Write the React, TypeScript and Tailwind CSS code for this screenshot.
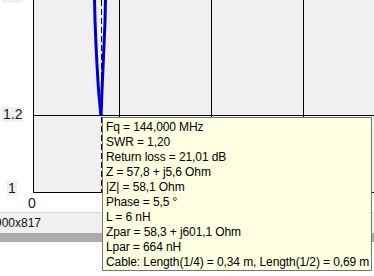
import React from "react";

const lines = [
  "Fq = 144,000 MHz",
  "SWR = 1,20",
  "Return loss = 21,01 dB",
  "Z = 57,8 + j5,6 Ohm",
  "|Z| = 58,1 Ohm",
  "Phase = 5,5 °",
  "L = 6 nH",
  "Zpar = 58,3 + j601,1 Ohm",
  "Lpar = 664 nH",
  "Cable: Length(1/4) = 0,34 m, Length(1/2) = 0,69 m",
];

function Chart() {
  return (
    <svg width="374" height="212" className="absolute inset-0" viewBox="0 0 374 212">
      <rect x="34" y="0" width="340" height="192" fill="#f0f0f0" />
      {/* grid */}
      <line x1="119.5" y1="0" x2="119.5" y2="192" stroke="#000" strokeWidth="1" />
      <line x1="211.5" y1="0" x2="211.5" y2="192" stroke="#000" strokeWidth="1" />
      <line x1="303.5" y1="0" x2="303.5" y2="192" stroke="#000" strokeWidth="1" />
      <line x1="33" y1="115.5" x2="374" y2="115.5" stroke="#000" strokeWidth="1" />
      {/* axes */}
      <line x1="33.5" y1="0" x2="33.5" y2="193" stroke="#000" strokeWidth="1" />
      <line x1="33" y1="192.5" x2="374" y2="192.5" stroke="#000" strokeWidth="1" />
      {/* marker */}
      <line x1="101.5" y1="0" x2="101.5" y2="192" stroke="#000" strokeWidth="1" strokeDasharray="6 3" />
      {/* SWR curve */}
      <polyline
        points="94.5,-2 95,20 96,45 97,65 98.5,90 100,106 101,116"
        fill="none"
        stroke="#0000c8"
        strokeWidth="3"
      />
      <polyline
        points="105.5,-2 105,22 104,45 103,68 102,90 101.5,106 101,116"
        fill="none"
        stroke="#0000c8"
        strokeWidth="3"
      />
    </svg>
  );
}

export default function App() {
  return (
    <div
      className="relative w-[374px] h-[276px] overflow-hidden bg-white"
      style={{ fontFamily: '"Liberation Sans", Arial, sans-serif' }}
    >
      <div className="relative h-[212px]">
        <Chart />
        <div className="absolute left-[2px] top-[-12px] px-[1px] bg-[#f0f0f0] text-[14px] leading-[15px] text-[#1a1a1a]">
          1.4
        </div>
        <div className="absolute left-[2px] top-[107px] px-[1px] bg-[#f0f0f0] text-[14px] leading-[15px] text-[#1a1a1a]">
          1.2
        </div>
        <div className="absolute left-[7px] top-[181px] px-[1px] bg-[#f0f0f0] text-[14px] leading-[15px] text-[#1a1a1a]">
          1
        </div>
        <div className="absolute left-[28px] top-[196px] text-[14px] leading-[15px] text-[#1a1a1a]">
          0
        </div>
      </div>
      <div className="border-t border-[#dadada] h-[21px] bg-[#f0f0f0] flex items-center">
        <span className="ml-[-5px] text-[12px] leading-[15px] text-[#111]">900x817</span>
      </div>
      <div className="h-[9px] bg-[#ababab]" />
      <div
        className="absolute left-[102px] top-[117px] border border-[#767676] bg-[#ffffe1] pl-[3px] pr-[2px] pt-[2px] text-[12px] leading-[15px] tracking-[-0.1px] text-black whitespace-nowrap"
      >
        {lines.map((l) => (
          <div key={l}>{l}</div>
        ))}
      </div>
    </div>
  );
}
